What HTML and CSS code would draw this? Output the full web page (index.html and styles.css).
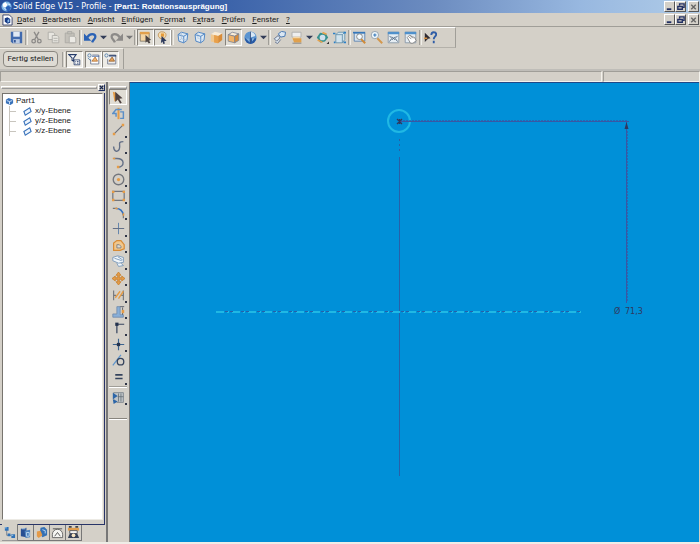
FILE: index.html
```html
<!DOCTYPE html>
<html lang="de">
<head>
<meta charset="utf-8">
<title>Solid Edge V15 - Profile</title>
<link rel="stylesheet" href="styles.css">
</head>
<body>
<header class="titlebar">
  <svg class="app-icon" viewBox="0 0 12 12"><circle cx="6" cy="6" r="5.5" fill="#7fb6e6"/><path d="M2 3l3-2 2 3-2 3-3-1z" fill="#fff"/><path d="M5 7l3-2 3 2-2 4H6z" fill="#2860b8"/><path d="M3 7l3 3M7 3l3 1" stroke="#e8f4ff"/></svg>
  <h1>Solid Edge V15 - Profile - <b>[Part1: Rotationsausprägung]</b></h1>
  <div class="winbtns">
    <button aria-label="Minimieren"><svg viewBox="0 0 10 10"><path d="M2 8h5" stroke="#223064" stroke-width="2"/></svg></button>
    <button aria-label="Wiederherstellen"><svg viewBox="0 0 10 10"><path d="M4 4V2h5v4H7M2 5h5v3H2z" fill="none" stroke="#223064" stroke-width="1.5"/></svg></button>
    <button class="close" aria-label="Schließen"><svg viewBox="0 0 10 10"><path d="M2.500 3l5 5m0-5l-5 5" stroke="#666" stroke-width="1.500"/></svg></button>
  </div>
</header>
<nav class="menubar">
  <svg class="doc-icon" viewBox="0 0 12 12"><path d="M1 .5h7l3 3v8H1z" fill="#fff" stroke="#33406a"/><path d="M3 4l3-1 3 2v4l-3 1-3-2z" fill="#173a85"/><path d="M6 6l2-1v3l-2 1z" fill="#8fc0ee"/></svg>
  <div class="menus">
    <button><u>D</u>atei</button><button><u>B</u>earbeiten</button><button><u>A</u>nsicht</button><button><u>E</u>infügen</button><button>F<u>o</u>rmat</button><button>E<u>x</u>tras</button><button><u>P</u>rüfen</button><button><u>F</u>enster</button><button><u>?</u></button>
  </div>
  <div class="winbtns">
    <button aria-label="Fenster minimieren"><svg viewBox="0 0 10 10"><path d="M2 8h5" stroke="#223064" stroke-width="2"/></svg></button>
    <button aria-label="Fenster wiederherstellen"><svg viewBox="0 0 10 10"><path d="M4 4V2h5v4H7M2 5h5v3H2z" fill="none" stroke="#223064" stroke-width="1.5"/></svg></button>
    <button class="close" aria-label="Fenster schließen"><svg viewBox="0 0 10 10"><path d="M2.500 3l5 5m0-5l-5 5" stroke="#666" stroke-width="1.500"/></svg></button>
  </div>
</nav>

<div class="toolbar">
  <button class="tool" aria-label="Speichern"><svg viewBox="0 0 16 16"><path d="M1 1h14v14H3l-2-2z" fill="#416aae"/><path d="M4 1h8v6H4z" fill="#dfe8f4"/><path d="M4 10h8v5H4z" fill="#b9c9e2"/><path d="M5 11h2v3H5z" fill="#2c4f90"/></svg></button>
  <i class="sep"></i>
  <button class="tool" aria-label="Ausschneiden"><svg viewBox="0 0 16 16" fill="none" stroke="#8c8a88" stroke-width="1.600"><path d="M5 1l5 9M11 1L6 10"/><circle cx="4.500" cy="12.500" r="2.200"/><circle cx="11.500" cy="12.500" r="2.200"/></svg></button>
  <button class="tool" aria-label="Kopieren"><svg viewBox="0 0 16 16" fill="#e8e6e0" stroke="#a9a7a2"><path d="M1.500 1.500h6l2 2v7h-8z"/><path d="M6.500 5.500h6l2 2v7h-8z"/><path d="M8 9h5M8 12h5"/></svg></button>
  <button class="tool" aria-label="Einfügen"><svg viewBox="0 0 16 16" fill="#c4c1ba" stroke="#a9a7a2"><path d="M1.500 2.500h11v12h-11z"/><path d="M4.500.5h5v3h-5z"/><path d="M6.500 6.500h6l2 2v6h-8z" fill="#eceae5"/></svg></button>
  <i class="sep"></i>
  <button class="tool" aria-label="Rückgängig"><svg viewBox="0 0 16 16"><path d="M4 8c3-6 10-5 10-1 0 3-3 4-4 7" fill="none" stroke="#2b62b5" stroke-width="2.800"/><path d="M0 3v9h9z" fill="#2b62b5"/></svg></button>
  <button class="arrow" aria-label="Liste Rückgängig"><svg viewBox="0 0 8 8"><path d="M0 2h8L4 6z" fill="#333d58"/></svg></button>
  <button class="tool" aria-label="Wiederherstellen"><svg viewBox="0 0 16 16"><path d="M12 8C9 2 2 3 2 7c0 3 3 4 4 7" fill="none" stroke="#8c8a88" stroke-width="2.800"/><path d="M16 3v9H7z" fill="#8c8a88"/></svg></button>
  <button class="arrow" aria-label="Liste Wiederherstellen"><svg viewBox="0 0 8 8"><path d="M0 2h8L4 6z" fill="#777"/></svg></button>
  <i class="sep"></i>
  <button class="tool on" aria-label="Auswahl"><svg viewBox="0 0 16 16"><path d="M1.500 2.500h11v10h-11z" fill="#f4d5a4" stroke="#7a7466"/><path d="M1 1h12v3H1z" fill="#e2a04c"/><path d="M8 5l7 6-3 .5 2 3-2 1-2-3-2 2z" fill="#4b4444"/></svg></button>
  <button class="tool on" aria-label="QuickPick"><svg viewBox="0 0 16 16"><path d="M7 1c7 0 6 6 3 8H5C1 6 3 1 7 1z" fill="#f5dfb7" stroke="#bd8a46"/><path d="M6 3h4v4H6z" fill="#e59b3a"/><path d="M7 6l6 6-3 .5 1 3-2 .500-1-3-2 2z" fill="#2f3b5c"/></svg></button>
  <i class="sep"></i>
  <button class="tool" aria-label="Drahtmodell"><svg viewBox="0 0 16 16" fill="#dfeaf4" stroke="#4f86c4" stroke-width="1.200"><path d="M2.500 4.500l4-3 8 2-1 8-4 3-6-2z"/><path d="M2.500 4.500l7 2v8M9.500 6.500l5-3" fill="none"/><path d="M6.500 1.500v8l-3 3M6.500 9.500l7 2" fill="none" stroke="#a7bdd5" stroke-width="1"/></svg></button>
  <button class="tool" aria-label="Verdeckte Kanten"><svg viewBox="0 0 16 16" fill="#dfeaf4" stroke="#4f86c4" stroke-width="1.200"><path d="M2.500 4.500l4-3 8 2-1 8-4 3-6-2z"/><path d="M2.500 4.500l7 2v8M9.500 6.500l5-3" fill="none"/><path d="M6 2v7l6 2" fill="none" stroke="#a7bdd5" stroke-dasharray="1 1"/></svg></button>
  <button class="tool" aria-label="Schattiert"><svg viewBox="0 0 16 16"><path d="M1 4l5-3 9 2-5 3z" fill="#f8ebd6"/><path d="M1 4l9 2v9l-9-2z" fill="#f0c78f"/><path d="M10 6l5-3v8l-5 4z" fill="#d98c38"/><path d="M5 5l5 1v9l-5-1z" fill="#e8a04b"/></svg></button>
  <button class="tool on" aria-label="Schattiert mit Kanten"><svg viewBox="0 0 16 16" stroke="#7c8494"><path d="M1.500 4.500l5-3 8 2-5 3z" fill="#f8ebd6"/><path d="M1.500 4.500l8 2v8l-8-2z" fill="#f2b469"/><path d="M9.500 6.500l5-3v8l-5 3z" fill="#d98c38"/></svg></button>
  <button class="tool" aria-label="Ansicht"><svg viewBox="0 0 16 16"><circle cx="8" cy="8" r="7.500" fill="#5b94d0"/><path d="M8 1a7 7 0 016 5L8 8z" fill="#d9e8f6"/><path d="M1 9h14a7 7 0 01-14 0z" fill="#2759a4"/><path d="M2 9h5v5z" fill="#7db0e0"/><path d="M10 9h3l-3 4z" fill="#9cc5e8"/><path d="M8 1v14" stroke="#35507f"/></svg></button>
  <button class="arrow" aria-label="Liste Ansicht"><svg viewBox="0 0 8 8"><path d="M0 2h8L4 6z" fill="#333d58"/></svg></button>
  <i class="sep"></i>
  <button class="tool" aria-label="Flächenansicht"><svg viewBox="0 0 16 16" fill="#dbe7f3" stroke="#4778b4" stroke-width="1.200"><path d="M6.500 3.500l4-3 5 1-1 5-5 1z"/><path d="M1.500 9.500l5-4 2 3-4 4zM2.500 13.500l3 2 4-5" stroke="#6d7890"/></svg></button>
  <button class="tool" aria-label="Skizzenansicht"><svg viewBox="0 0 16 16"><path d="M2.500 1.500h11v6h-11z" fill="#eee" stroke="#a7a7a7"/><path d="M1 10l4-3h8l-3 3z" fill="#f5d7a6"/><path d="M3 9h11v5H5z" fill="#e0a04c"/><path d="M3 15h11" stroke="#777"/></svg></button>
  <button class="arrow" aria-label="Liste Skizzenansicht"><svg viewBox="0 0 8 8"><path d="M0 2h8L4 6z" fill="#333d58"/></svg></button>
  <button class="tool" aria-label="Drehen"><svg viewBox="0 0 16 16"><path d="M1 8l4-6 7 1 3 5-4 5-6 1z" fill="#37918f"/><circle cx="8" cy="8" r="3.500" fill="#cfe0ee"/><path d="M2 11l6 3M8 2l5 2" stroke="#e7a24c" stroke-width="2"/><path d="M13 16h3v-3z" fill="#333"/></svg></button>
  <button class="tool" aria-label="Gemeinsame Ansichten"><svg viewBox="0 0 16 16"><path d="M3.500 4.500l3-3h8v9l-3 4h-8zM3.500 4.500h8v10M11.500 4.500l3-3" fill="#d2e3ed" stroke="#5e8ca8"/><path d="M0 3h3M13 14h3M1 14h2M13 2h3" stroke="#2a80c8" stroke-width="2"/></svg></button>
  <i class="sep"></i>
  <button class="tool" aria-label="Zoombereich"><svg viewBox="0 0 16 16"><path d="M1.500 2.500h13v10h-13z" fill="#dbe6ef" stroke="#4c79ac"/><path d="M0 1h15v2H0z" fill="#3477bb"/><circle cx="8" cy="7" r="3.500" fill="#f4fbff" stroke="#777"/><path d="M10 10l5 5" stroke="#cf8a38" stroke-width="2.500"/></svg></button>
  <button class="tool" aria-label="Zoom"><svg viewBox="0 0 16 16"><circle cx="6" cy="5" r="4.500" fill="#eef6fa" stroke="#8a99a8"/><path d="M4 5h4M6 3v4" stroke="#3777b8" stroke-width="1.300"/><path d="M9 9l6 6" stroke="#d3984e" stroke-width="2.500"/></svg></button>
  <button class="tool" aria-label="Einpassen"><svg viewBox="0 0 16 16"><path d="M1.500 1.500h13v13h-13z" fill="#e5edf3" stroke="#8090a3"/><path d="M1 1h14v3H1z" fill="#4f90cb"/><path d="M3 6l3 3-3 4M13 6l-3 3 3 4M6 7l4 4M10 7l-4 4" fill="none" stroke="#536b85" stroke-width="1.200"/></svg></button>
  <button class="tool" aria-label="Verschieben"><svg viewBox="0 0 16 16"><path d="M1.500 1.500h13v13h-13z" fill="#e5edf3" stroke="#8090a3"/><path d="M1 1h14v3H1z" fill="#4f90cb"/><path d="M4 8l3-3 3 2 3 1 2 4-4 3H8z" fill="#fff" stroke="#777"/><path d="M6 7l3 3M8 6l3 3" stroke="#777"/></svg></button>
  <i class="sep"></i>
  <button class="tool" aria-label="Direkthilfe"><svg viewBox="0 0 16 16"><path d="M1 2l7 7-3 .500-4 4z" fill="#2e2a32"/><path d="M0 9h4" stroke="#d69144" stroke-width="2"/><path d="M9 5c0-5 6-4 6-1 0 3-3 3-3 6M12 12v3" fill="none" stroke="#2f5da6" stroke-width="2.300"/></svg></button>
</div>

<div class="ribbon">
  <button class="finish">Fertig stellen</button>
  <i class="sep"></i>
  <button class="rib on" aria-label="Filter"><svg viewBox="0 0 16 16"><path d="M1 2h9L7 6v4L5 9V6z" fill="#fff" stroke="#243a68" stroke-width="1.300"/><path d="M7.500 8.500h7v6h-7z" fill="#fff" stroke="#243a68"/><path d="M9 10.500h1m1 0h2M9 12.500h1m1 0h2" stroke="#243a68"/></svg></button>
  <button class="rib on" aria-label="Beziehungen anzeigen"><svg viewBox="0 0 16 16"><circle cx="3" cy="3" r="2" fill="none" stroke="#4776a9"/><path d="M6.500 2.500h8v11h-10v-6" fill="#fff" stroke="#69738a"/><path d="M6 4h9" stroke="#365d99"/><path d="M6 10l4-5 3 5z" fill="#f0b978" stroke="#b36e2d"/><path d="M1 6l4 4" stroke="#4776a9"/></svg></button>
  <button class="rib on" aria-label="Beziehungen beibehalten"><svg viewBox="0 0 16 16"><circle cx="3" cy="3" r="2" fill="none" stroke="#4776a9"/><path d="M6.500 2.500h8v11h-10v-6" fill="#eee" stroke="#69738a"/><path d="M6 3.500h9" stroke="#243a68" stroke-width="1.500"/><path d="M6 10l4-5 3 5z" fill="#e7a359" stroke="#94602e"/></svg></button>
</div>

<div class="prompt"><div class="msg"></div><div class="msg short"></div></div>

<main class="workspace">
  <aside class="browser">
    <div class="grip"><i class="bar"></i><button class="x" aria-label="Leiste schließen"><svg viewBox="0 0 8 8"><path d="M2 2l4 4M6 2L2 6" stroke="#18264c" stroke-width="1.300"/></svg></button></div>
    <div class="pane">
      <div class="tree">
        <div class="node"><svg viewBox="0 0 10 10"><path d="M1 3l3-2 5 2v4L6 9 1 7z" fill="#3972ba"/><path d="M2 4l3 1v3M5 5l3-1" fill="none" stroke="#d8eaff"/></svg>Part1</div>
        <ul>
          <li><svg viewBox="0 0 10 10"><path d="M1 5l6.500-4 1.500 4-6.500 4z" fill="#eef5fc" stroke="#3972ba" stroke-width="1.200"/></svg>x/y-Ebene</li>
          <li><svg viewBox="0 0 10 10"><path d="M1 5l6.500-4 1.500 4-6.500 4z" fill="#eef5fc" stroke="#3972ba" stroke-width="1.200"/></svg>y/z-Ebene</li>
          <li><svg viewBox="0 0 10 10"><path d="M1 5l6.500-4 1.500 4-6.500 4z" fill="#eef5fc" stroke="#3972ba" stroke-width="1.200"/></svg>x/z-Ebene</li>
        </ul>
      </div>
    </div>
    <div class="tabs">
      <button class="active" aria-label="Strukturbaum"><svg viewBox="0 0 14 14"><path d="M4 4v6h6" fill="none" stroke="#79828d"/><path d="M2 1h4v4H2zM5 8h3v3H5zM9 9h4v4H9z" fill="#2f71b7"/><path d="M2 2h2M9 10h2" stroke="#a8d2f2"/></svg></button>
      <button aria-label="Bibliothek"><svg viewBox="0 0 14 14"><path d="M2 3l6-1v10l-6-1z" fill="#284f92"/><path d="M6 5l6-1v8l-5 1z" fill="#4f83be"/><path d="M3 3h4M8 7h3v4H8z" stroke="#bcd6ed" fill="none"/></svg></button>
      <button aria-label="Familie"><svg viewBox="0 0 14 14"><path d="M6 2l4-1 3 3v6l-5 2-3-4z" fill="#3370b5"/><path d="M2 6l4-1 2 5-4 3-2-2z" fill="#e49a49"/><path d="M8 4l3 1v3" fill="none" stroke="#c0dcf4"/></svg></button>
      <button aria-label="Sensoren"><svg viewBox="0 0 14 14"><path d="M1.500 12.500V9a5.500 5.500 0 0111 0v3.500z" fill="#f5f5f2" stroke="#666"/><path d="M2 3h10M4 11l3-4 3 4" fill="none" stroke="#555"/></svg></button>
      <button aria-label="Wiedergabe"><svg viewBox="0 0 14 14"><path d="M1 2h12v3H1z" fill="#e09b4b"/><path d="M2 1h3M9 1h3" stroke="#444" stroke-width="2"/><path d="M3 5h8v3H3z" fill="#fff" stroke="#555"/><path d="M1 13l2-5h8l2 5z" fill="#364156"/><circle cx="7" cy="10" r="2" fill="#f7e4c1"/></svg></button>
    </div>
  </aside>

  <div class="palette">
    <i class="bar"></i>
    <div class="group">
      <button class="on" aria-label="Auswählen"><svg viewBox="0 0 16 16"><path d="M1 1l4 1 2 9-4 2z" fill="#e59c47"/><path d="M4 1l9 8-4 .500 3 5-2 1-3-5-3 3z" fill="#4d4140"/></svg></button>
      <button aria-label="Rotationsachse"><svg viewBox="0 0 16 16"><path d="M8 1v14" stroke="#e59c47" stroke-width="2.500"/><path d="M5 12V8H1l4-5h7M10 6h4v8h-4" fill="none" stroke="#5b8fc7" stroke-width="1.800"/></svg></button>
      <button class="more" aria-label="Linie"><svg viewBox="0 0 16 16"><path d="M2 14L14 2" stroke="#686d78" stroke-width="1.400"/><path d="M1 12h3v3H1zM12 1h3v3h-3z" fill="#e59c47"/></svg></button>
      <button class="more" aria-label="Kurve"><svg viewBox="0 0 16 16"><path d="M2 8c0 6 5 8 7 3S6 2 14 2" fill="none" stroke="#647087" stroke-width="1.700"/></svg></button>
      <button class="more" aria-label="Bogen"><svg viewBox="0 0 16 16"><path d="M2 3h4c10 0 10 10 1 11" fill="none" stroke="#647087" stroke-width="1.700"/><path d="M1 2h3v2H1zM6 12h3v3H6z" fill="#e59c47"/></svg></button>
      <button class="more" aria-label="Kreis"><svg viewBox="0 0 16 16"><circle cx="8" cy="8" r="6.500" fill="none" stroke="#74777d" stroke-width="1.700"/><circle cx="8" cy="8" r="2" fill="#e59c47"/></svg></button>
      <button class="more" aria-label="Rechteck"><svg viewBox="0 0 16 16"><path d="M1 3h14v11H1z" fill="none" stroke="#74777d" stroke-width="1.500"/><path d="M0 2h3v3H0zM13 2h3v3h-3zM0 12h3v3H0zM13 12h3v3h-3z" fill="#e59c47"/></svg></button>
      <button class="more" aria-label="Verrundung"><svg viewBox="0 0 16 16"><path d="M1 3h5M14 10v5" stroke="#74777d" stroke-width="1.500"/><path d="M5 3c5 0 8 3 9 8" fill="none" stroke="#3370c0" stroke-width="2"/><path d="M4 2h3v2H4zM13 9h2v3h-2z" fill="#e59c47"/></svg></button>
      <button class="more" aria-label="Trimmen"><svg viewBox="0 0 16 16"><path d="M8 1v14" stroke="#6687ad" stroke-width="1.300"/><path d="M1 8h14" stroke="#647087" stroke-width="1.300"/></svg></button>
      <button class="more" aria-label="Versatz"><svg viewBox="0 0 16 16"><path d="M2 14V5l4-3h5l4 5v5l-5 2z" fill="#f1c78d" stroke="#d88b35" stroke-width="1.500"/><path d="M6 11V7h3l2 2v2z" fill="#dedbd3" stroke="#74777d"/></svg></button>
      <button class="more" aria-label="Spiegeln"><svg viewBox="0 0 16 16" fill="#f1f6fa" stroke="#6d8fb4"><path d="M1 3l6-2 7 2v6l-6 1-7-3zM3 4l9 3M7 2l6 4M6 10l2 4 6-1-3-3"/></svg></button>
      <button class="more" aria-label="Verschieben"><svg viewBox="0 0 16 16"><path d="M8 0l3 4H9v3h3V5l4 3-4 3V9H9v3h2l-3 4-3-4h2V9H4v2L0 8l4-3v2h3V4H5z" fill="#e59c47" stroke="#c8802f"/></svg></button>
      <button class="more" aria-label="Bemaßung"><svg viewBox="0 0 16 16"><path d="M2 3v12M14 3v12M2 9h3M11 9h3" stroke="#74777d" stroke-width="1.400"/><path d="M4 12l6-8M8 13l6-9" stroke="#e59c47" stroke-width="1.700"/></svg></button>
      <button class="more" aria-label="Abstand"><svg viewBox="0 0 16 16"><path d="M1 11h5V2h4v10h4v3H1z" fill="#88afd8" stroke="#6f89aa"/><path d="M10 2h5M13 3v9" stroke="#4b5261"/><path d="M12 6h3v4h-3z" fill="#e59c47"/></svg></button>
      <button class="more" aria-label="Verbinden"><svg viewBox="0 0 16 16"><path d="M6 15V4h9" fill="none" stroke="#34435d" stroke-width="1.500"/><path d="M4 2h4v4H4z" fill="#25334e"/></svg></button>
      <button class="more" aria-label="Horizontal und vertikal"><svg viewBox="0 0 16 16"><path d="M8 1v14M1 8h14" stroke="#3a638f" stroke-width="1.400"/><path d="M6 6h4v4H6z" fill="#25334e"/></svg></button>
      <button aria-label="Tangente"><svg viewBox="0 0 16 16"><path d="M1 14L11 1" stroke="#5c94cc" stroke-width="1.500"/><circle cx="10.500" cy="9.500" r="4" fill="none" stroke="#34435d" stroke-width="1.600"/></svg></button>
      <button class="more" aria-label="Gleich"><svg viewBox="0 0 16 16"><path d="M4 6h9M4 10.500h9" stroke="#34435d" stroke-width="2"/></svg></button>
    </div>
    <i class="rule"></i>
    <button class="more" aria-label="Variablen"><svg viewBox="0 0 16 16"><path d="M2 2h12v12H6L2 10z" fill="#bfc4c8" stroke="#778089"/><path d="M1 2l6 4-6 4zM1 10l6 3-5 3z" fill="#2b65a8"/><path d="M8 3v10M11 3v10M7 7h7" stroke="#657078"/></svg></button>
    <i class="end"></i>
  </div>

  <section class="canvas">
    <svg width="100%" height="100%" aria-label="Profilskizze">
      <path d="M269.500 56v15" stroke="#2860a8" stroke-dasharray="2 3"/>
      <path d="M269.500 74v319" stroke="#2860a8"/>
      <path d="M86 229h366" stroke="#20b8e4" stroke-width="2" stroke-dasharray="8 3 2 3"/>
      <path d="M95 228.500h357" stroke="#2860a8" stroke-dasharray="3 2 3 8"/>
      <circle cx="269" cy="38" r="11" fill="none" stroke="#20b8e4" stroke-width="2"/>
      <path d="M269 38.500h230M496.500 38v182" fill="none" stroke="#3858a4"/>
      <path d="M270 37.500h228M497.500 48v170" stroke="#3858a4" stroke-dasharray="2 1" opacity=".7"/>
      <path d="M267 36l5 5m0-5l-5 5M269.500 36v5" stroke="#303860" stroke-width="1.300"/>
      <path d="M496.500 39l-2 7h4z" fill="#303860"/>
      <text class="dim" x="484" y="231">Ø</text>
      <text class="dim" x="495" y="231">71,3</text>
    </svg>
  </section>
</main>
</body>
</html>
```
FILE: styles.css
```css
* { box-sizing: border-box; }
body {
  margin: 0;
  height: 100vh;
  display: flex;
  flex-direction: column;
  background: #d4d0c8;
  font: 8px/10px "Liberation Sans", Arial, sans-serif;
  color: #202020;
  overflow: hidden;
}
button {
  display: flex;
  align-items: center;
  justify-content: center;
  padding: 0;
  border: 0;
  background: none;
  font: inherit;
  color: inherit;
}
svg { display: block; flex: none; }

.titlebar {
  display: flex;
  align-items: center;
  height: 13px;
  padding: 0 1px;
  background: linear-gradient(90deg, #28509c 0, #3860a8 30%, #6c8cc0 62%, #98b8e0 83%, #b0cce8 100%);
  color: #fff;
}
.app-icon { width: 11px; height: 11px; }
.titlebar h1 {
  flex: 1;
  margin: 0 0 0 1px;
  font: 8px/12px "DejaVu Sans", Verdana, sans-serif;
}
.titlebar b { font-family: "Liberation Sans", Arial, sans-serif; }
.winbtns { display: flex; }
.winbtns button {
  width: 11px;
  height: 11px;
  background: #d4d0c8;
  border: 1px solid;
  border-color: #fff #555 #555 #fff;
}
.winbtns svg { width: 9px; height: 9px; }
.winbtns .close { margin-left: 2px; }

.menubar {
  display: flex;
  align-items: center;
  height: 14px;
  padding: 0 1px;
  border-bottom: 1px solid #a09e98;
}
.doc-icon { width: 11px; height: 12px; margin-left: 1px; }
.menus {
  flex: 1;
  display: flex;
  gap: 7px;
  padding-left: 4px;
  font-family: Roboto, "Liberation Sans", sans-serif;
}

.toolbar {
  display: flex;
  align-items: center;
  align-self: flex-start;
  width: 456px;
  height: 21px;
  padding-left: 8px;
  border: solid;
  border-width: 1px 1px 1px 0;
  border-color: #fff #a09e98 #b4b1aa;
}
.tool { width: 17px; height: 17px; }
.tool svg { width: 13px; height: 13px; }
.arrow { width: 9px; height: 17px; }
.arrow svg { width: 7px; height: 7px; }
.on {
  background: #e0ddd5;
  border: 1px solid;
  border-color: #86837c #fff #fff #86837c;
}
.sep {
  width: 3px;
  height: 15px;
  border-left: 1px solid #a09e98;
  border-right: 1px solid #f0eee8;
}

.ribbon {
  display: flex;
  align-items: center;
  align-self: flex-start;
  height: 21px;
  padding: 0 4px 0 3px;
  border-right: 1px solid #a09e98;
  border-top: 1px solid #f0eee8;
}
.finish {
  width: 55px;
  height: 16px;
  margin-right: 4px;
  border: 1px solid #8a8780;
  border-radius: 4px;
  background: #dedbd4;
  font-family: Roboto, "Liberation Sans", sans-serif;
}
.ribbon .sep { margin-right: 1px; }
.rib { width: 17px; height: 17px; background: #eeece6; }
.rib:nth-of-type(2) { margin-right: 2px; }
.rib svg { width: 13px; height: 13px; }

.prompt {
  display: flex;
  gap: 1px;
  height: 13px;
  border-top: 2px solid #bfbdb8;
}
.msg {
  flex: 1;
  border: 1px solid;
  border-color: #a09e98 #f4f2ec #f4f2ec #a09e98;
}
.msg.short { flex: 0 0 97px; }

.workspace {
  flex: 1;
  display: flex;
  min-height: 0;
  border-bottom: 2px solid #efede7;
}
.browser {
  display: flex;
  flex-direction: column;
  width: 106px;
}
.grip {
  display: flex;
  align-items: center;
  gap: 1px;
  height: 11px;
  padding: 0 1px;
}
.bar {
  flex: 1;
  height: 3px;
  border: 1px solid;
  border-color: #fff #999 #999 #fff;
}
.x { width: 7px; height: 7px; border: 1px solid; border-color: #fff #203060 #203060 #fff; }
.x svg { width: 7px; height: 7px; }
.pane {
  flex: 1;
  display: flex;
  padding: 0 1px 4px 2px;
  border-right: 1px solid #283468;
  border-bottom: 1px solid #283468;
  margin-right: 1px;
}
.tree {
  flex: 1;
  padding: 2px;
  background: #fff;
  border: 1px solid;
  border-color: #77746e #eceae4 #eceae4 #77746e;
}
.node, .tree li { display: flex; align-items: center; gap: 2px; height: 10px; }
.tree svg { width: 9px; height: 9px; }
.tree ul { margin: 0 0 0 4px; padding: 0; list-style: none; }
.tree li { gap: 3px; border-left: 1px solid #c8c5be; }
.tree li::before { content: ""; width: 6px; margin-right: 4px; border-top: 1px solid #c8c5be; }
.tabs { display: flex; height: 17px; padding: 0 0 1px 2px; }
.tabs button {
  width: 16px;
  border: solid #777;
  border-width: 0 1px 1px 0;
}
.tabs .active { border-bottom-color: #999; margin-top: -1px; background: #d4d0c8; }
.tabs svg { width: 13px; height: 13px; }

.palette {
  display: flex;
  flex-direction: column;
  align-items: center;
  width: 24px;
  padding: 4px 2px 0 1px;
  border: solid #777;
  border-width: 0 1px 0 2px;
}
.palette .bar { flex: none; align-self: stretch; }
.group {
  display: flex;
  flex-direction: column;
  justify-content: space-between;
  height: 296px;
}
.palette button { width: 18px; height: 16px; position: relative; }
.palette svg { width: 13px; height: 13px; }
.palette .more::after {
  content: "";
  position: absolute;
  right: 0;
  bottom: 0;
  width: 2px;
  height: 2px;
  background: #303648;
}
.rule { align-self: stretch; height: 2px; margin: 1px 0; border-top: 1px solid #a09e98; background: #fff; }
.end { align-self: stretch; height: 2px; margin-top: 13px; border-top: 1px solid #88857e; background: #fff; }

.canvas {
  flex: 1;
  min-width: 0;
  border-top: 1px solid #204888;
  margin-right: 1px;
  background: #0090d8;
}
.dim { font: 8px "DejaVu Sans", Verdana, sans-serif; fill: #303860; }
```
